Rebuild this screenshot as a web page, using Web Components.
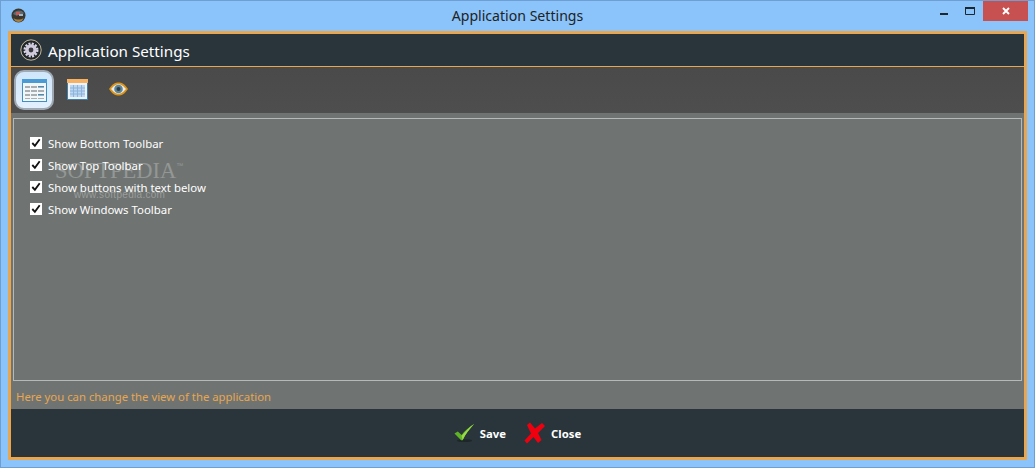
<!DOCTYPE html>
<html>
<head>
<meta charset="utf-8">
<title>Application Settings</title>
<style>
html, body { margin: 0; height: 100%; overflow: hidden; }
body { font-family: "Open Sans", "Noto Sans", sans-serif; }
</style>
</head>
<body>
<settings-window caption="Application Settings">
    <settings-header slot="header">Application Settings</settings-header>
    <settings-toolbar slot="toolbar"></settings-toolbar>
    <settings-panel slot="panel">
        <settings-check>Show Bottom Toolbar</settings-check>
        <settings-check>Show Top Toolbar</settings-check>
        <settings-check>Show buttons with text below</settings-check>
        <settings-check>Show Windows Toolbar</settings-check>
    </settings-panel>
    <settings-footer slot="footer"></settings-footer>
</settings-window>

<script>
class SettingsWindow extends HTMLElement
{
    constructor() {
        super()
        const shadow = this.attachShadow({ mode: 'open' })
        shadow.innerHTML = `
        <style>
        :host {
            display: flex;
            flex-direction: column;
            box-sizing: border-box;
            width: 1035px;
            height: 468px;
            background: #8ac4fb;
            border: 1px solid #6f9fd2;
        }
        .caption {
            display: flex;
            align-items: center;
            height: 30px;
            flex: none;
            position: relative;
        }
        .app-icon { margin: -2px 0 0 10px; width: 15px; height: 15px; flex: none; }
        .text {
            position: absolute;
            left: 0;
            right: 0;
            top: 5px;
            text-align: center;
            font: 14.1px/19px "Noto Sans", sans-serif;
            color: #222;
        }
        .buttons {
            position: absolute;
            top: 0;
            right: 6px;
            display: flex;
            align-items: stretch;
            height: 20px;
        }
        .btn { width: 26px; display: flex; align-items: center; justify-content: center; }
        .btn.min svg { margin-top: 6px; }
        .btn.close { width: 45px; background: #c75050; }
        .frame {
            flex: none;
            display: flex;
            flex-direction: column;
            box-sizing: border-box;
            width: 1019px;
            height: 429px;
            margin-left: 7px;
            background: #e8a650;
            border: 3px solid #e8a650;
        }
        </style>
        <div class="caption">
            <svg class="app-icon" viewBox="0 0 15 15">
                <circle cx="7.5" cy="7.5" r="7" fill="#3a3630"/>
                <path d="M2 6c2-4 8-5 11-1l-2 2-3-1-2 2z" fill="#5c6a70"/>
                <path d="M5 4h4v3H5z" fill="#c05a58"/>
                <path d="M8 6h4v2H8z" fill="#9fb6c2"/>
                <path d="M2.5 10c3 2 7 2 10 0-1 3-3 4-5 4s-4-1-5-4z" fill="#a8823f"/>
            </svg>
            <div class="text">${this.getAttribute('caption')}</div>
            <div class="buttons">
                <div class="btn min"><svg width="8" height="2"><rect width="8" height="2" fill="#1d2730"/></svg></div>
                <div class="btn"><svg width="10" height="8" viewBox="0 0 10 8"><path d="M.5 1.5h9v6h-9z" fill="none" stroke="#1d2730"/><rect width="10" height="2" fill="#1d2730"/></svg></div>
                <div class="btn close"><svg width="8" height="8" viewBox="0 0 8 8"><path d="M1 1l6 6M7 1L1 7" stroke="#fff" stroke-width="1.9"/></svg></div>
            </div>
        </div>
        <div class="frame">
            <slot name="header"></slot>
            <slot name="toolbar"></slot>
            <slot name="panel"></slot>
            <slot name="footer"></slot>
        </div>
        `
    }
}

class SettingsHeader extends HTMLElement
{
    constructor() {
        super()
        const shadow = this.attachShadow({ mode: 'open' })
        shadow.innerHTML = `
        <style>
        :host {
            display: flex;
            align-items: center;
            flex: none;
            gap: 6px;
            height: 32px;
            padding-left: 9px;
            background: #29353b;
            color: #fff;
            font: 15.2px "Noto Sans", sans-serif;
            border-bottom: 1px solid #e8a650;
        }
        svg { width: 22px; height: 22px; flex: none; }
        span { padding-top: 2px; }
        </style>
        <svg viewBox="0 0 22 22">
            <circle cx="11" cy="11" r="10.2" fill="#20282c" stroke="#d8c8a8" stroke-width=".9"/>
            <circle cx="11" cy="11" r="6.300" fill="none" stroke="#d8d4e4" stroke-width="2.400" stroke-dasharray="2 1.300"/>
            <circle cx="11" cy="11" r="5.800" fill="#cfcbdc"/>
            <circle cx="11" cy="11" r="2.400" fill="#39393f"/>
        </svg>
        <span><slot></slot></span>
        `
    }
}

class SettingsToolbar extends HTMLElement
{
    constructor() {
        super()
        const shadow = this.attachShadow({ mode: 'open' })
        shadow.innerHTML = `
        <style>
        :host {
            display: flex;
            align-items: center;
            flex: none;
            box-sizing: border-box;
            height: 46px;
            padding-left: 3px;
            background: linear-gradient(#4a4a4a, #4f4e4e);
        }
        .tool { width: 40px; height: 40px; display: flex; align-items: center; justify-content: center; box-sizing: border-box; flex: none; }
        .tool.on {
            border-radius: 10px;
            border: 2px solid #9fa9b3;
            background: linear-gradient(#cfe6fb, #e2f0fd);
        }
        </style>
        <div class="tool on">
            <svg width="25" height="23" viewBox="0 0 25 23">
                <rect x=".5" y=".5" width="24" height="22" fill="#f3f6f8" stroke="#3d8fc4"/>
                <rect width="25" height="4" fill="#4a9ad3"/>
                <path d="M3 7h5v2H3zm6 0h6v2H9zm7 0h6v2h-6zM3 11h5v2H3zm6 0h6v2H9zm7 0h6v2h-6zM3 15h5v2H3zm6 0h6v2H9zm7 0h6v2h-6zM3 19h5v1H3zm6 0h6v1H9zm7 0h6v1h-6z" fill="#a9aeb0"/>
                <path d="M16 7h6v1h-6zM16 15h6v1h-6z" fill="#3d8fc4"/>
            </svg>
        </div>
        <div class="tool" style="margin-left:3px">
            <svg width="21" height="21" viewBox="0 0 21 21" style="margin-top:-2px">
                <rect x=".5" y=".5" width="20" height="20" fill="#eef3f7" stroke="#3d7fa8"/>
                <rect width="21" height="4" fill="#f6b163"/>
                <rect x="3" y="6" width="15" height="12" fill="#bcd7f0"/>
                <path d="M3 9h15M3 12h15M3 15h15M6.5 6v12M10.5 6v12M14.5 6v12" stroke="#8db4dc"/>
            </svg>
        </div>
        <div class="tool" style="margin-left:1px">
            <svg width="21" height="14" viewBox="0 0 20 14" style="margin-top:-2px">
                <path d="M.5 7C4 1.500 7 .5 10 .5S16 1.500 19.500 7C16 12.500 13 13.500 10 13.500S4 12.500 .5 7z" fill="#dd9417"/>
                <path d="M2.500 7C6 3 8 2.200 10 2.200S14 3 17.500 7C14 11 12 11.800 10 11.800S6 11 2.500 7z" fill="#e6eef4"/>
                <circle cx="10" cy="7" r="4.300" fill="#5d8597"/>
                <circle cx="10" cy="7" r="2" fill="#2e3b42"/>
            </svg>
        </div>
        `
    }
}

class SettingsPanel extends HTMLElement
{
    constructor() {
        super()
        const shadow = this.attachShadow({ mode: 'open' })
        shadow.innerHTML = `
        <style>
        :host {
            display: flex;
            flex-direction: column;
            flex: none;
            box-sizing: border-box;
            height: 296px;
            padding: 5px 2px 0 2px;
            background: #6f7472;
            position: relative;
        }
        .box {
            flex: none;
            box-sizing: border-box;
            height: 263px;
            border: 1px solid #b5b9b7;
            padding: 13px 0 0 16px;
            display: flex;
            flex-direction: column;
        }
        .hint {
            padding: 8px 0 0 3px;
            font: 11.33px/16px "Noto Sans", sans-serif;
            color: #e8a650;
        }
        .mark { position: absolute; left: 44px; top: 46px; pointer-events: none; }
        .mark b { display: block; font: 22.5px/24px "Liberation Serif", serif; color: #939795; }
        .mark span { display: block; font: 10px/11px "Liberation Sans", sans-serif; margin: 6px 0 0 19px; color: #9a9e9c; letter-spacing: .3px; }
        .mark sup { font: 7px "Liberation Sans", sans-serif; vertical-align: 10px; }
        </style>
        <div class="mark"><b>SOFTPEDIA<sup>™</sup></b><span>www.softpedia.com</span></div>
        <div class="box"><slot></slot></div>
        <div class="hint">Here you can change the view of the application</div>
        `
    }
}

class SettingsCheck extends HTMLElement
{
    constructor() {
        super()
        const shadow = this.attachShadow({ mode: 'open' })
        shadow.innerHTML = `
        <style>
        :host {
            display: flex;
            align-items: center;
            gap: 6px;
            height: 22px;
            color: #fff;
            font: 11.4px "Noto Sans", sans-serif;
            position: relative;
            z-index: 1;
        }
        .box { width: 12px; height: 12px; background: #fff; flex: none; display: flex; }
        </style>
        <span class="box">
            <svg width="12" height="12" viewBox="0 0 13 13"><path d="M2.500 6.500l2.800 3L10.500 2.500" fill="none" stroke="#111" stroke-width="2"/></svg>
        </span>
        <span><slot></slot></span>
        `
    }
}

class SettingsFooter extends HTMLElement
{
    constructor() {
        super()
        const shadow = this.attachShadow({ mode: 'open' })
        shadow.innerHTML = `
        <style>
        :host {
            display: flex;
            align-items: center;
            justify-content: center;
            flex: none;
            box-sizing: border-box;
            flex-grow: 1;
            background: #29353b;
            color: #fff;
            font: bold 11.3px "Noto Sans", sans-serif;
        }
        .action { display: flex; align-items: center; gap: 5px; }
        .action + .action { margin-left: 18px; }
        </style>
        <div class="action">
            <svg width="21" height="20" viewBox="0 0 22 20">
                <ellipse cx="11" cy="18" rx="8" ry="1.500" fill="#1e2629"/>
                <path d="M.5 10.500l3.500-2 4 3.500C11 8 15.500 4 21 .5 16 6 12 11 9 17.500H7.500z" fill="#5fb324"/>
                <path d="M21 .5C16 6 12 11 9 17.500L8 13C12 8 16 4 21 .5z" fill="#9bd94a"/>
            </svg>
            <span>Save</span>
        </div>
        <div class="action">
            <svg width="22" height="22" viewBox="0 0 22 22">
                <path d="M6 .5l5 6 7-5.500 3 3-7 7 3.500 7-3.500 3-4.500-6L3 21.500.5 18.500 7 11.500 3 3z" fill="#f0000f"/>
            </svg>
            <span>Close</span>
        </div>
        `
    }
}

customElements.define('settings-window', SettingsWindow)
customElements.define('settings-header', SettingsHeader)
customElements.define('settings-toolbar', SettingsToolbar)
customElements.define('settings-panel', SettingsPanel)
customElements.define('settings-check', SettingsCheck)
customElements.define('settings-footer', SettingsFooter)
</script>
</body>
</html>
